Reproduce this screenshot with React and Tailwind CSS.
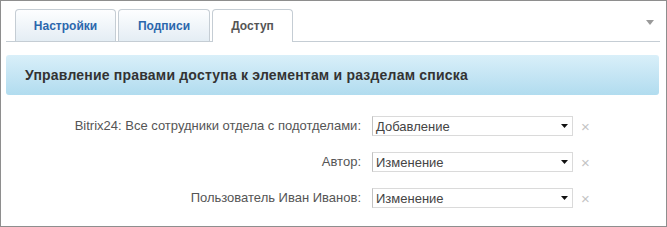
import React from 'react';

const tabs = [
  { label: 'Настройки', w: 'w-[101px]', active: false },
  { label: 'Подписи', w: 'w-[92px]', active: false },
  { label: 'Доступ', w: 'w-[81px]', active: true },
];

const rights = [
  { who: 'Bitrix24: Все сотрудники отдела с подотделами:', value: 'Добавление' },
  { who: 'Автор:', value: 'Изменение' },
  { who: 'Пользователь Иван Иванов:', value: 'Изменение' },
];

function Tab({ tab }) {
  if (tab.active) {
    return (
      <div
        className={`${tab.w} h-[33px] -mb-px flex items-center justify-center rounded-t-[4px] border border-b-0 border-[#c5cdd4] bg-white text-[12px] font-bold text-[#555]`}
      >
        {tab.label}
      </div>
    );
  }
  return (
    <div
      className={`${tab.w} h-[32px] flex items-center justify-center rounded-t-[4px] border border-b-0 border-[#c5cdd4] bg-gradient-to-b from-[#fdfeff] to-[#e4edf4] text-[12px] font-bold text-[#2c67ad]`}
    >
      {tab.label}
    </div>
  );
}

function FakeSelect({ value }) {
  return (
    <div className="w-[201px] h-[20px] flex items-center justify-between border border-[#dadada] border-l-[#c2c2c2] bg-white pl-[3px] pr-[4px]">
      <span className="text-[13px] leading-none text-[#444]">{value}</span>
      <svg width="7" height="4" viewBox="0 0 7 4">
        <path d="M0 0h7L3.5 4z" fill="#111" />
      </svg>
    </div>
  );
}

export default function App() {
  return (
    <div
      className="w-[667px] h-[227px] border border-[#8e8e8e] bg-white overflow-hidden"
      style={{ fontFamily: '"Liberation Sans", Arial, sans-serif' }}
    >
      <div className="mx-[5px] mr-[6px] pt-[8px] flex items-end justify-between border-b border-[#c5cdd4]">
        <div className="flex items-end gap-[2px] pl-[9px]">
          {tabs.map((t) => (
            <Tab key={t.label} tab={t} />
          ))}
        </div>
        <svg width="8" height="5" viewBox="0 0 8 5" className="mb-[16px] mr-[6px]">
          <path d="M0 0h8L4 5z" fill="#9a9a9a" />
        </svg>
      </div>

      <div className="mx-[5px] mr-[7px] mt-[13px] h-[40px] flex items-center rounded-[3px] bg-gradient-to-b from-[#d9eff9] to-[#b1dcef] pl-[19px]">
        <span className="text-[14px] font-bold tracking-[0.2px] text-[#333]">
          Управление правами доступа к элементам и разделам списка
        </span>
      </div>

      <div className="mt-[21px] flex flex-col gap-[16px]">
        {rights.map((r) => (
          <div key={r.who} className="flex items-center">
            <div className="w-[360px] text-right text-[13px] text-[#555]">{r.who}</div>
            <div className="ml-[11px]">
              <FakeSelect value={r.value} />
            </div>
            <span className="ml-[8px] text-[15px] leading-none text-[#c4c4c4]">×</span>
          </div>
        ))}
      </div>
    </div>
  );
}
